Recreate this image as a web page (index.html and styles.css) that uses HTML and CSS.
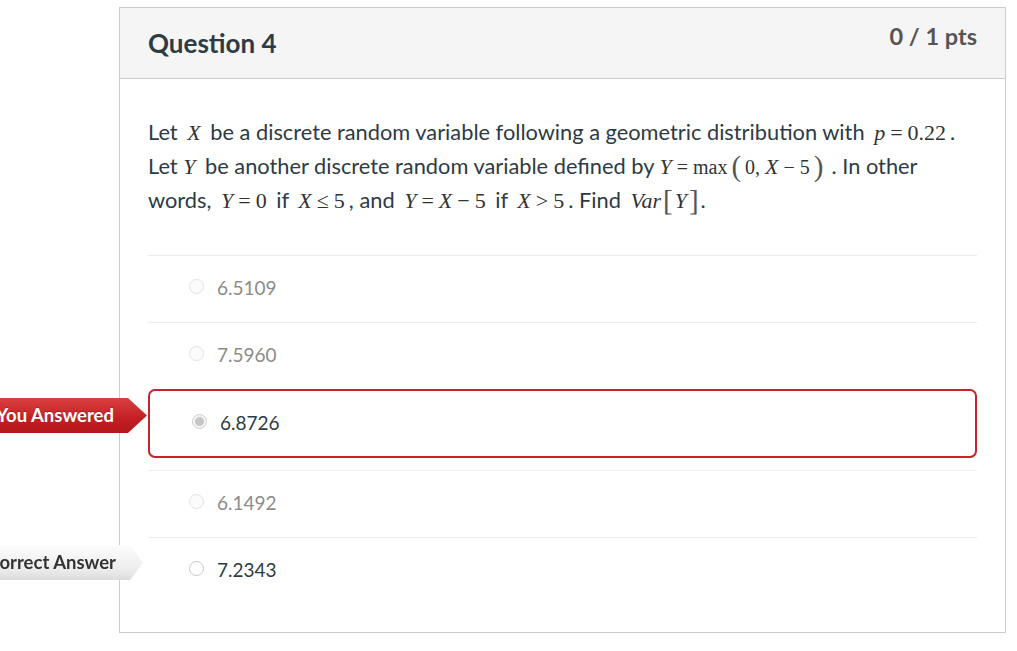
FILE: index.html
```html
<!DOCTYPE html>
<html>
<head>
<meta charset="utf-8">
<link rel="stylesheet" href="styles.css">
</head>
<body>
<div class="page">
  <div class="card">
    <div class="card-header">
      <h2 class="title">Question 4</h2>
      <div class="pts">0 / 1 pts</div>
    </div>
    <div class="card-body">
      <p class="question">Let <span class="mx"><span class="m i">X</span></span> be a discrete random variable following a geometric distribution with <span class="mx"><span class="m i">p</span><span class="m op">=</span><span class="m">0.22</span></span>.<br>Let <span class="mx l0"><span class="m i">Y</span></span> be another discrete random variable defined by <span class="mx l0"><span class="m i">Y</span><span class="m sm op">=</span><span class="m sm">max</span><span class="m big wide">(</span><span class="m sm">0, </span><span class="m i">X</span><span class="m sm op">−</span><span class="m sm">5</span><span class="m big wide">)</span></span>. In other<br>words, <span class="mx"><span class="m i">Y</span><span class="m op">=</span><span class="m">0</span></span> if <span class="mx"><span class="m i">X</span><span class="m op">≤</span><span class="m">5</span></span>, and <span class="mx"><span class="m i">Y</span><span class="m op">=</span><span class="m i">X</span><span class="m op">−</span><span class="m">5</span></span> if <span class="mx"><span class="m i">X</span><span class="m op">&gt;</span><span class="m">5</span></span>. Find <span class="mx r0"><span class="m i">Var</span><span class="m big">[</span><span class="m i">Y</span><span class="m big">]</span></span>.</p>
      <div class="answers">
        <div class="answer muted"><span class="radio"></span><span class="val">6.5109</span></div>
        <div class="answer muted"><span class="radio"></span><span class="val">7.5960</span></div>
        <div class="answer selected">
          <div class="tag tag-wrong">You Answered</div>
          <span class="radio checked"></span><span class="val">6.8726</span>
        </div>
        <div class="answer muted after-sel"><span class="radio"></span><span class="val">6.1492</span></div>
        <div class="answer correct">
          <div class="tag tag-correct">Correct Answer</div>
          <span class="radio"></span><span class="val">7.2343</span>
        </div>
      </div>
    </div>
  </div>
</div>
</body>
</html>
```
FILE: styles.css
```css
html, body {
  margin: 0;
  padding: 0;
  background: #fff;
  font-family: Lato, "Open Sans", sans-serif;
  color: #2d3b45;
  overflow: hidden;
}
.page {
  padding: 7px 11px 0 119px;
}
.card {
  width: 887px;
  height: 626px;
  border: 1px solid #c7cdd1;
  box-sizing: border-box;
  background: #fff;
}
.card-header {
  height: 71px;
  background: #f5f5f5;
  border-bottom: 1px solid #c7cdd1;
  box-sizing: border-box;
  display: flex;
  justify-content: space-between;
  align-items: flex-start;
  padding: 0 28px 0 28px;
}
.title {
  margin: 0;
  font-size: 26px;
  font-weight: 700;
  line-height: 30px;
  padding-top: 20px;
  color: #2d3b45;
}
.pts {
  font-size: 23.5px;
  font-weight: 700;
  color: #555;
  line-height: 28px;
  padding-top: 14px;
}
.card-body {
  padding: 36px 28px 0 28px;
}
.question {
  margin: 0;
  font-size: 21.8px;
  line-height: 34px;
  color: #2d3b45;
}
.mx { margin: 0 4px; }
.mx.l0 { margin-left: 0; }
.mx.r0 { margin-right: 0; }
.m {
  font-family: "Liberation Serif", "Times New Roman", serif;
  font-size: 22px;
  line-height: 0;
  color: #333;
}
.m.op { margin: 0 5px; }
.m.sm { font-size: 20px; }
.i { font-style: italic; }
.big { font-size: 29px; color: #555; vertical-align: -2px; margin: 0 2px; }
.big.wide { margin: 0 4px; }
.answers {
  margin-top: 38px;
}
.answer {
  position: relative;
  height: 67px;
  border-top: 1px solid #ececec;
  box-sizing: border-box;
  display: flex;
  align-items: center;
  padding-left: 41px;
  padding-bottom: 3px;
  font-size: 19px;
}
.answer.muted .val { color: #8b8b8b; }
.answer .val { margin-left: 13px; }
.radio {
  width: 15px;
  height: 15px;
  border-radius: 50%;
  border: 1px solid #e3e3e3;
  background: #fbfbfb;
  box-sizing: border-box;
  margin-top: -2px;
}
.answer.correct .radio { border-color: #c9c9c9; background: #fff; }
.radio.checked {
  border-color: #d0d0d0;
  background: radial-gradient(circle, #c6c6c6 0 4px, #f4f4f4 5px);
}
.answer.selected {
  height: 69px;
  border: 2px solid #c9222b;
  border-radius: 7px;
  padding-left: 42px;
  margin-bottom: 12px;
}
.answer.selected + .answer { border-top-color: #efefef; }
.answer.correct { height: 95px; padding-bottom: 31px; }
.tag {
  position: absolute;
  font-weight: 700;
  font-size: 18.5px;
  white-space: nowrap;
  height: 35px;
  line-height: 35px;
  box-sizing: border-box;
  display: flex;
  justify-content: flex-end;
}
.tag-wrong {
  left: -150px;
  top: 7px;
  width: 147px;
  padding-right: 33px;
  color: #fff;
  background: linear-gradient(#d9413f, #c31f22 60%, #b4171b);
  clip-path: polygon(0 0, 128px 0, 100% 50%, 128px 100%, 0 100%);
  text-shadow: 0 -1px 0 rgba(0,0,0,0.25);
}
.tag-correct {
  left: -148px;
  top: 7px;
  width: 143px;
  padding-right: 27px;
  color: #333;
  background: linear-gradient(#fdfdfd, #ececec 70%, #dcdcdc);
  clip-path: polygon(0 0, 130px 0, 100% 50%, 130px 100%, 0 100%);
  filter: drop-shadow(0 0 0.5px #999);
}
```
